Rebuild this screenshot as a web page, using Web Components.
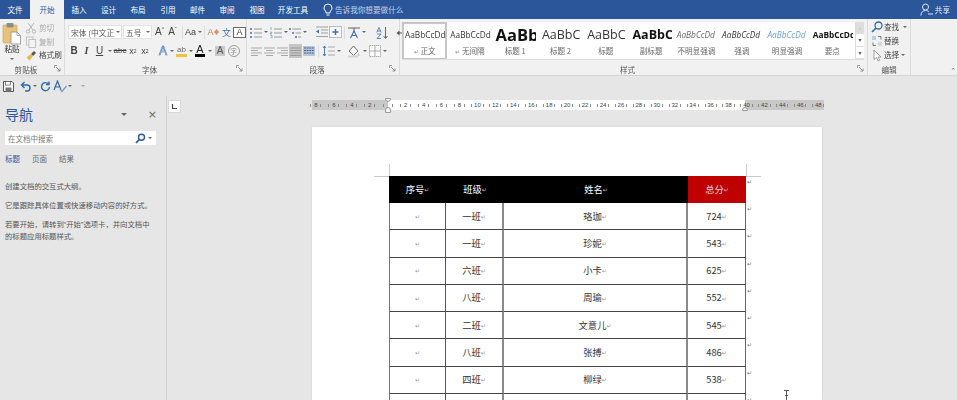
<!DOCTYPE html>
<html lang="zh"><head><meta charset="utf-8"><title>Word</title>
<style>
html,body{margin:0;padding:0;height:400px;overflow:hidden;background:#e6e6e6;font-family:"Noto Sans CJK SC","Liberation Sans",sans-serif}
</style></head><body>
<word-app></word-app>
<script>
const FONT='"Noto Sans CJK SC","Liberation Sans",sans-serif';
const CJK="'Noto Sans CJK SC'";
const ICONS={
paste:'<svg width="20" height="23" viewBox="0 0 20 23"><rect x="1" y="3" width="14" height="18" rx="1" fill="#e9c37a" stroke="#c9a057" stroke-width=".6"/><rect x="4.5" y="1" width="7" height="4.5" rx="1" fill="#8c8c8c"/><path d="M9 10h6l3.500 3.500V22H9z" fill="#fff" stroke="#8a8a8a" stroke-width=".8"/><path d="M15 10v3.500h3.500" fill="none" stroke="#8a8a8a" stroke-width=".7"/></svg>',
cut:'<svg width="12" height="12" viewBox="0 0 12 12" fill="none" stroke="#b5b5b5" stroke-width="1"><path d="M3 1l5 7M9 1L4 8"/><circle cx="3" cy="9.500" r="1.700"/><circle cx="9" cy="9.500" r="1.700"/></svg>',
copy:'<svg width="12" height="12" viewBox="0 0 12 12" fill="#f4f4f4" stroke="#bcbcbc" stroke-width=".9"><rect x="1.500" y="1" width="6.500" height="8"/><rect x="4" y="3.500" width="6.500" height="8"/></svg>',
brush:'<svg width="12" height="12" viewBox="0 0 12 12"><path d="M6 5l3-3 2 2-3 3z" fill="#555"/><path d="M1.500 8.500L6 5l2 2-3.500 4.500z" fill="#e8b84a"/></svg>',
bul:'<svg width="12" height="11" viewBox="0 0 12 11"><g fill="#6f8fbc"><rect x="0" y="1" width="2" height="2"/><rect x="0" y="5" width="2" height="2"/><rect x="0" y="9" width="2" height="2"/></g><path d="M4 2h8M4 6h8M4 10h8" stroke="#9a9a9a"/></svg>',
num:'<svg width="12" height="11" viewBox="0 0 12 11"><path d="M1 0v3M.3 5h1.500v1H.5v1h1.500M.3 8.500H2v2.500H.3" stroke="#6f8fbc" stroke-width=".7" fill="none"/><path d="M4 2h8M4 6h8M4 10h8" stroke="#9a9a9a"/></svg>',
multi:'<svg width="12" height="11" viewBox="0 0 12 11"><g fill="#6f8fbc"><rect x="0" y="1" width="2" height="2"/><rect x="3" y="5" width="2" height="2"/><rect x="6" y="9" width="2" height="2"/></g><path d="M3.500 2h8.500M6.500 6H12M9 10h3" stroke="#9a9a9a"/></svg>',
dec:'<svg width="13" height="12" viewBox="0 0 13 12"><path d="M6 4h7M6 7h7M1 10.500h12M1 1h12" stroke="#a0a0a0"/><path d="M4 3.500L1 5.500l3 2z" fill="#3f70ad"/></svg>',
inc:'<svg width="13" height="12" viewBox="0 0 13 12"><rect x=".5" y=".5" width="12" height="11" fill="#f6f6f6" stroke="#bbb"/><path d="M6.500 3v6M3.500 6h6" stroke="#3f70ad" stroke-width="1.400"/></svg>',
axis:'<svg width="14" height="13" viewBox="0 0 14 13"><path d="M1 2h12M7 2v4" stroke="#555" stroke-width=".9"/><path d="M3.500 12L7 5l3.500 7M5 9.500h4" stroke="#3f70ad" stroke-width="1.100" fill="none"/></svg>',
sort:'<svg width="13" height="13" viewBox="0 0 13 13"><path d="M3 1.500L.8 6.500M3 1.500l2.200 5M1.500 5h3M1 8h4L1 12.500h4" stroke="#3f70ad" stroke-width=".8" fill="none"/><path d="M9.500 1v11M7.500 10l2 2.500 2-2.500" stroke="#555" stroke-width=".9" fill="none"/></svg>',
mark:'<svg width="13" height="12" viewBox="0 0 13 12"><path d="M11 2v5H4" stroke="#555" stroke-width="1.100" fill="none"/><path d="M5.500 4.500L2.500 7l3 2.500z" fill="#555"/></svg>',
al:'<svg width="11" height="9" viewBox="0 0 11 9"><path d="M0 1h11M0 3.500h7M0 6h11M0 8.500h7" stroke="#a8a8a8"/></svg>',
ac:'<svg width="11" height="9" viewBox="0 0 11 9"><path d="M0 1h11M2 3.500h7M0 6h11M2 8.500h7" stroke="#a8a8a8"/></svg>',
ar:'<svg width="11" height="9" viewBox="0 0 11 9"><path d="M0 1h11M4 3.500h7M0 6h11M4 8.500h7" stroke="#a8a8a8"/></svg>',
aj:'<svg width="11" height="9" viewBox="0 0 11 9"><path d="M0 1h11M0 3.500h11M0 6h11M0 8.500h11" stroke="#9a9a9a"/></svg>',
ad:'<svg width="12" height="10" viewBox="0 0 12 10"><rect width="12" height="10" fill="#b9c6d8"/><path d="M1 2h10M1 4.500h10M1 7h10" stroke="#3e6496" stroke-dasharray="2 .6"/></svg>',
ls:'<svg width="13" height="12" viewBox="0 0 13 12"><path d="M2.500 1v10M1 3l1.500-2L4 3M1 9l1.500 2L4 9" stroke="#3f70ad" fill="none" stroke-width=".9"/><path d="M6 2h7M6 6h7M6 10h7" stroke="#aaa"/></svg>',
shade:'<svg width="14" height="13" viewBox="0 0 14 13"><path d="M6.500 1L2 6l4.500 4.500L11 6z" fill="#f7f7f7" stroke="#777"/><path d="M11.500 7.500c1 1.500 1.500 2 1 3s-2 .5-2-.5.500-1.500 1-2.500z" fill="#c9c9c9"/><rect x="1" y="10.500" width="10" height="2" fill="#d3d3d3"/></svg>',
border:'<svg width="12" height="12" viewBox="0 0 12 12"><rect x=".5" y=".5" width="11" height="11" fill="#fbfbfb" stroke="#aaa" stroke-dasharray="1.500 .6"/><path d="M6 .5v11M.5 6h11" stroke="#aaa"/></svg>',
find:'<svg width="12" height="12" viewBox="0 0 12 12" fill="none" stroke="#2b6aa8" stroke-width="1.300"><circle cx="7.500" cy="4.500" r="3.500"/><path d="M5 7l-4 4" stroke-width="1.600"/></svg>',
replace:'<svg width="12" height="12" viewBox="0 0 12 12"><path d="M1 1h4v4H1z" fill="#bcd0e4"/><path d="M7 7h4v4H7z" fill="#d8d8d8"/><path d="M7 1.500h3v3M5 10.500H2v-3" stroke="#777" fill="none"/></svg>',
select:'<svg width="12" height="13" viewBox="0 0 12 13"><path d="M3 1v9.500l2.500-2 1.800 3.500 1.400-.8L7 8h3z" fill="#fff" stroke="#888" stroke-width=".8"/></svg>',
save:'<svg width="11" height="11" viewBox="0 0 11 11"><path d="M.5.500h8.500l1.500 1.500v8.500H.5z" fill="#fff" stroke="#555"/><rect x="2.500" y=".5" width="5" height="3.500" fill="#fff" stroke="#555" stroke-width=".7"/><rect x="2.500" y="6.500" width="6" height="4" fill="#777"/></svg>',
undo:'<svg width="11" height="11" viewBox="0 0 11 11" fill="none" stroke="#2b6aa8" stroke-width="1.400"><path d="M2 4h5a3 3 0 0 1 0 6H5"/><path d="M4.500 1L1.500 4l3 3"/></svg>',
redo:'<svg width="11" height="11" viewBox="0 0 11 11" fill="none" stroke="#2b6aa8" stroke-width="1.400"><path d="M8.500 3A4 4 0 1 0 9.500 6"/><path d="M9 .5v3H6"/></svg>',
spell:'<svg width="14" height="13" viewBox="0 0 14 13" fill="none" stroke="#2b6aa8" stroke-width="1.200"><path d="M1 10L4.500 1 8 10M2.500 7h4"/><path d="M7 9l2 2.500L13.500 6" stroke="#7f95b5"/></svg>',
bulb:'<svg width="10" height="13" viewBox="0 0 10 13" fill="none" stroke="#fff" stroke-width="1"><path d="M3 8.500C1.500 7.500 1 6.300 1 5a4 4 0 0 1 8 0c0 1.300-.5 2.500-2 3.500V10H3z"/><path d="M3.500 12h3"/></svg>',
user:'<svg width="13" height="13" viewBox="0 0 13 13" fill="none" stroke="#dbe5f3" stroke-width="1"><circle cx="5.500" cy="4" r="3"/><path d="M.8 12.500C1.200 9 3 7.500 5.500 7.500c1.500 0 2.700.5 3.500 1.500M8 11h5"/></svg>',
search:'<svg width="11" height="11" viewBox="0 0 11 11" fill="none" stroke="#2b579a" stroke-width="1.400"><circle cx="6.500" cy="4.200" r="3"/><path d="M4.300 6.500L1 10" stroke-width="1.700"/></svg>',
launch:'<svg width="7" height="7" viewBox="0 0 7 7"><path d="M.5 3V.5H3" stroke="#888" fill="none" stroke-width=".8"/><path d="M2 2l3.500 3.500M6 3.500V6H3.500" stroke="#777" fill="none" stroke-width=".8"/></svg>',
tabstop:'<svg width="7" height="7" viewBox="0 0 7 7"><path d="M1.500 1v4.500H6" stroke="#444" fill="none" stroke-width="1.200"/></svg>',
ibeam:'<svg width="7" height="11" viewBox="0 0 7 11"><path d="M1 .5h5M1 10.500h5M3.500.5v10M2 5.500h3" stroke="#333" stroke-width=".8" fill="none"/></svg>'
};
class El extends HTMLElement{
  constructor(){super();this.attachShadow({mode:'open'});}
  connectedCallback(){this.shadowRoot.innerHTML=this.render();}
}
const d=(n,c)=>customElements.define(n,c);
d('x-ico',class extends El{render(){return `<style>:host{display:inline-flex;align-items:center;justify-content:center;line-height:0}</style>${ICONS[this.getAttribute('n')]||''}`}});
d('x-tool',class extends El{render(){
  const w=this.getAttribute('w')||13;const act=this.hasAttribute('on');
  return `<style>:host{display:flex;align-items:center;justify-content:center;flex:none;width:${w}px;height:14px;font:${this.getAttribute('f')||"10px 'Liberation Sans',sans-serif"};color:${this.getAttribute('c')||'#444'};${act?'background:#c6c6c6;':''}line-height:1;white-space:nowrap}</style><slot></slot>`}});
d('x-caret',class extends El{render(){return `<style>:host{display:flex;align-items:center;justify-content:center;flex:none;width:${this.getAttribute('w')||7}px;height:14px}i{width:0;height:0;border:2px solid transparent;border-top:2.500px solid #666;border-bottom:0}</style><i></i>`}});
d('x-tab',class extends El{render(){const a=this.hasAttribute('on');return `<style>:host{display:flex;align-items:center;justify-content:center;flex:none;width:${this.getAttribute('w')}px;height:19px;font-size:7.600px;color:${a?'#2b579a':'#fff'};${a?'background:#f1f1f1;':''}}</style><slot></slot>`}});
d('x-tabbar',class extends El{render(){return `<style>:host{display:flex;height:19px;background:#2b579a;align-items:center;flex:none}
.tell{display:flex;align-items:center;gap:2px;margin-left:9px;color:#c6d4ea;font-size:7.600px}
.share{margin-left:auto;display:flex;align-items:center;gap:2px;color:#e6edf7;font-size:7.600px;padding-right:7px}</style>
<x-tab w="30">文件</x-tab><x-tab w="34" on>开始</x-tab><x-tab w="30">插入</x-tab><x-tab w="29">设计</x-tab><x-tab w="30">布局</x-tab><x-tab w="30">引用</x-tab><x-tab w="29">邮件</x-tab><x-tab w="30">审阅</x-tab><x-tab w="30">视图</x-tab><x-tab w="42">开发工具</x-tab>
<div class="tell"><x-ico n="bulb"></x-ico><span>告诉我你想要做什么</span></div>
<div class="share"><x-ico n="user"></x-ico><span>共享</span></div>`}});
d('x-group',class extends El{render(){const l=this.getAttribute('label');const lc=this.hasAttribute('launch');return `<style>:host{display:flex;flex-direction:column;flex:none;box-sizing:border-box;width:${this.getAttribute('w')}px;height:56px;border-right:1px solid #dcdcdc;position:relative}
.c{flex:1;min-height:0;display:flex;flex-direction:column}
.l{height:13px;flex:none;display:flex;align-items:center;justify-content:center;font-size:7.600px;color:#555;line-height:1;padding-right:${this.getAttribute('lp')||0}px;padding-top:3px;box-sizing:border-box}
x-ico{position:absolute;right:3px;bottom:3px}</style><div class="c"><slot></slot></div><div class="l">${l}</div>${lc?'<x-ico n="launch"></x-ico>':''}`}});
d('x-row',class extends El{render(){return `<style>:host{display:flex;align-items:center;flex:none;height:${this.getAttribute('h')||14}px;margin-top:${this.getAttribute('mt')||0}px;margin-left:${this.getAttribute('ml')||0}px;gap:${this.getAttribute('g')||0}px}</style><slot></slot>`}});
d('x-box',class extends El{render(){return `<style>:host{display:flex;align-items:center;flex:none;box-sizing:border-box;width:${this.getAttribute('w')}px;height:14px;background:#fff;border:1px solid #e2e2e2;font-size:7.800px;color:#555;padding-left:2px;overflow:hidden;white-space:nowrap;margin-right:1px}span{flex:1;overflow:hidden}</style><span><slot></slot></span><x-caret w="6"></x-caret>`}});
d('x-smallbtn',class extends El{render(){return `<style>:host{display:flex;align-items:center;height:14px;gap:${this.getAttribute('g')||2}px;font-size:7.600px;color:${this.getAttribute('c')||'#444'};white-space:nowrap;line-height:1}</style><x-ico n="${this.getAttribute('n')}"></x-ico><slot></slot>`}});
d('x-style-item',class extends El{render(){const s=this.getAttribute('s')||'';const on=this.hasAttribute('on');return `<style>:host{display:flex;flex-direction:column;align-items:center;flex:none;box-sizing:border-box;width:45.300px;height:38px;overflow:hidden;${on?'border:2.500px solid #c6c6c6;':'border:2.500px solid transparent;'}}
.w{width:100%;height:19px;margin-top:2px;overflow:hidden;flex:none}
.p{height:19px;white-space:nowrap;display:flex;align-items:center;font-family:"Open Sans","Liberation Sans",sans-serif;color:#333;line-height:1;${s}}
.n{font-size:7.600px;color:#666;line-height:1;margin-top:2px;white-space:nowrap}</style><div class="w"><div class="p">${this.getAttribute('p')}</div></div><div class="n"><slot></slot></div>`}});
d('x-gallery',class extends El{render(){return `<style>:host{display:flex;flex:none;margin:3px 0 0 2px;height:38px;width:462px;background:#fff;box-sizing:border-box;border-bottom:1px solid #ddd}
.items{display:flex;width:453px;overflow:hidden;flex:none}
.sb{width:9px;flex:none;display:flex;flex-direction:column;border-left:1px solid #ddd;box-sizing:border-box}
.sb div{flex:1;display:flex;align-items:center;justify-content:center;font:6px "DejaVu Sans",sans-serif;color:#555;border-bottom:1px solid #e0e0e0;background:#fff}
.sb div:first-child{background:#dedede;color:#ccc}</style><div class="items"><slot></slot></div><div class="sb"><div>▴</div><div>▾</div><div>▾</div></div>`}});
d('x-ribbon',class extends El{render(){return `<style>:host{display:flex;height:56px;background:#f1f1f1;border-bottom:1px solid #d4d4d4;flex:none;box-sizing:content-box;font-family:${FONT};position:relative}
.sep{width:1px;height:13px;background:#ddd;margin:0 2px;flex:none}
.clip{display:flex;height:43px}.pv{width:24px;display:flex;flex-direction:column;align-items:center;font-size:7.600px;color:#333;padding-top:3px;line-height:1}
.pv span{margin-top:0}
.col{display:flex;flex-direction:column;margin-top:2px;margin-left:1px}
.collapse{position:absolute;right:1px;bottom:0;font:7px "DejaVu Sans",sans-serif;color:#666}
b,i,u{font-family:"Liberation Sans",sans-serif}
sub,sup{font-size:5px;line-height:0}
</style>
<x-group w="65" label="剪贴板" launch lp="12"><div class="clip"><div class="pv"><x-ico n="paste"></x-ico><span>粘贴</span><x-caret w="8" style="height:8px;margin-top:2px"></x-caret></div>
<div class="col"><x-smallbtn n="cut" c="#a8a8a8">剪切</x-smallbtn><x-smallbtn n="copy" c="#a8a8a8">复制</x-smallbtn><x-smallbtn n="brush">格式刷</x-smallbtn></div></div></x-group>
<x-group w="182" label="字体" launch lp="12">
<x-row mt="6" ml="3"><x-box w="54">宋体 (中文正文)</x-box><x-box w="29">五号</x-box><x-tool w="13" f="10px 'Liberation Sans'">A<span style="font-size:5px;margin-top:-5px">^</span></x-tool><x-tool w="13" f="10px 'Liberation Sans'">A<span style="font-size:5px;margin-top:-5px">ˇ</span></x-tool><span class="sep" style="margin:0 1px 0 3px"></span><x-tool w="13" f="9px 'Liberation Sans'">Aa</x-tool><x-caret w="6"></x-caret><span class="sep" style="margin:0 1px"></span><x-tool w="14" f="9px 'Liberation Sans'" c="#b9855f">A<svg width="5" height="6" viewBox="0 0 5 6"><path d="M2.500 0L5 3 2.500 6 0 3z" fill="#e08a6a"/></svg></x-tool><x-tool w="13" f="9px ${CJK}" c="#3f70ad">文</x-tool><x-tool w="13" f="9px 'Liberation Sans'"><span style="border:1px solid #666;padding:0 2px;background:#fff">A</span></x-tool></x-row>
<x-row mt="5" ml="3"><x-tool w="12"><b>B</b></x-tool><x-tool><i style="font-family:'Liberation Serif';font-weight:700">I</i></x-tool><x-tool><u>U</u></x-tool><x-caret></x-caret><x-tool w="14" f="8px 'Liberation Sans'"><s>abc</s></x-tool><x-tool w="12" f="9px 'Liberation Sans'"><b style="font-weight:500">x</b><sub>2</sub></x-tool><x-tool w="12" f="9px 'Liberation Sans'"><b style="font-weight:500">x</b><sup>2</sup></x-tool><span style="width:6px;flex:none"></span>
<x-tool w="12" f="12px 'Liberation Sans'" c="#7fa2d3"><span style="-webkit-text-stroke:.6px #4472b5;color:#e8eef8">A</span></x-tool><x-caret w="6"></x-caret>
<x-tool w="13" f="8px 'Liberation Sans'" c="#6a6a6a"><span style="border-bottom:3px solid #f0c23c;line-height:8px;padding:0 1px">ab</span></x-tool><x-caret w="6"></x-caret>
<x-tool w="12" f="11px 'Liberation Sans'" c="#222"><span style="border-bottom:3px solid #000;line-height:9px;padding:0 1px">A</span></x-tool><x-caret w="7"></x-caret>
<x-tool w="14" f="10px 'Liberation Sans'" c="#555"><span style="background:#c9c9c9;padding:0 1.500px">A</span></x-tool><x-tool w="13" f="8px ${CJK}" c="#888"><span style="border:1px solid #999;border-radius:50%;width:10px;height:10px;display:flex;align-items:center;justify-content:center;font-size:6.500px">字</span></x-tool></x-row>
</x-group>
<x-group w="153" label="段落" launch lp="12">
<x-row mt="6" ml="2"><x-tool w="13"><x-ico n="bul"></x-ico></x-tool><x-caret></x-caret><x-tool w="13"><x-ico n="num"></x-ico></x-tool><x-caret></x-caret><x-tool w="12"><x-ico n="multi"></x-ico></x-tool><x-caret></x-caret><span style="width:6px;flex:none"></span><x-tool w="14"><x-ico n="dec"></x-ico></x-tool><x-tool w="14"><x-ico n="inc"></x-ico></x-tool><span class="sep" style="margin:0 2px"></span><x-tool w="14"><x-ico n="axis"></x-ico></x-tool><x-caret w="6"></x-caret><span style="width:9px;flex:none"></span><x-tool w="13"><x-ico n="sort"></x-ico></x-tool><span style="width:5px;flex:none"></span><x-tool w="13"><x-ico n="mark"></x-ico></x-tool></x-row>
<x-row mt="5" ml="3"><x-tool w="13"><x-ico n="al"></x-ico></x-tool><x-tool w="13"><x-ico n="ac"></x-ico></x-tool><x-tool w="13"><x-ico n="ar"></x-ico></x-tool><x-tool w="13" on><x-ico n="aj"></x-ico></x-tool><x-tool w="13"><x-ico n="ad"></x-ico></x-tool><span class="sep" style="margin:0 2px 0 3px"></span><x-tool w="14"><x-ico n="ls"></x-ico></x-tool><x-caret></x-caret><span style="width:5px;flex:none"></span><x-tool w="14"><x-ico n="shade"></x-ico></x-tool><x-caret></x-caret><x-tool w="13"><x-ico n="border"></x-ico></x-tool><x-caret></x-caret></x-row>
</x-group>
<x-group w="468" label="样式" launch lp="12"><x-gallery>
<x-style-item on p="AaBbCcDd" s="font-size:8.300px;padding-left:1px"><small style="font-size:6px;color:#888">↵</small> 正文</x-style-item>
<x-style-item p="AaBbCcDd" s="font-size:8.300px;padding-left:1px"><small style="font-size:6px;color:#888">↵</small> 无间隔</x-style-item>
<x-style-item p="AaBbC" s="font-size:16.500px;font-weight:700;color:#111;padding-left:1px">标题 1</x-style-item>
<x-style-item p="AaBbC" s="font-size:12.500px;padding-left:2px">标题 2</x-style-item>
<x-style-item p="AaBbC" s="font-size:12.500px;padding-left:2px">标题</x-style-item>
<x-style-item p="AaBbC" s="font-size:12.500px;font-weight:700;color:#111;padding-left:2px">副标题</x-style-item>
<x-style-item p="AaBbCcDd" s="font-size:8.300px;font-style:italic;color:#666;padding-left:1px">不明显强调</x-style-item>
<x-style-item p="AaBbCcDd" s="font-size:8.300px;font-style:italic;padding-left:1px">强调</x-style-item>
<x-style-item p="AaBbCcDd" s="font-size:8.300px;font-style:italic;color:#6a9bd0;padding-left:1px">明显强调</x-style-item>
<x-style-item p="AaBbCcDd" s="font-size:8.300px;font-weight:700;color:#111;padding-left:1px">要点</x-style-item>
</x-gallery></x-group>
<x-group w="43" label="编辑"><div class="col" style="margin:1px 0 0 3px;gap:0"><x-smallbtn g="1" n="find">查找 <x-caret w="6" style="display:inline-flex;height:8px;margin-left:2px"></x-caret></x-smallbtn><x-smallbtn g="1" n="replace">替换</x-smallbtn><x-smallbtn g="1" n="select">选择 <x-caret w="6" style="display:inline-flex;height:8px"></x-caret></x-smallbtn></div></x-group>
<span class="collapse">⌃</span>`}});
d('x-qat',class extends El{render(){return `<style>:host{display:flex;align-items:center;height:20px;flex:none;padding-left:2px;background:#e6e6e6;border-bottom:0}
span{color:#bbb;font-size:7px}</style><x-tool w="12"><x-ico n="save"></x-ico></x-tool><span style="width:5px"></span><x-tool w="13"><x-ico n="undo"></x-ico></x-tool><x-caret w="6"></x-caret><x-tool w="14"><x-ico n="redo"></x-ico></x-tool><span style="width:1px"></span><x-tool w="14"><x-ico n="spell"></x-ico></x-tool><x-caret w="6"></x-caret><span style="width:6px"></span><x-caret w="7" style="opacity:.5"></x-caret>`}});
d('x-nav',class extends El{render(){return `<style>:host{display:block;box-sizing:border-box;width:167px;height:100%;padding:0 10px 0 5px;border-right:1px solid #d0d0d0;background:#e6e6e6;color:#444;font-family:${FONT};flex:none}
.head{display:flex;align-items:center;height:26px;margin-top:5px;font-size:14px;color:#2b579a;line-height:1}
.head b{font-weight:400;flex:1}
.arrow{width:0;height:0;border:3px solid transparent;border-top:3.500px solid #666;border-bottom:0;margin-right:21px}
.x{font:11px "DejaVu Sans",sans-serif;color:#666;margin-right:-1px}
.search{display:flex;align-items:center;box-sizing:border-box;height:14px;background:#fff;font-size:7.500px;color:#777;padding:0 3px;margin-top:4px;width:151px}
.search span{flex:1}
.tabs{display:flex;gap:12px;margin-top:9px;font-size:7.500px;color:#666;line-height:9px}
.tabs .on{color:#2b579a}
p{margin:0;font-size:7.350px;line-height:10.200px;color:#555;white-space:nowrap}
q{quotes:none;font-family:"Liberation Sans",sans-serif}
</style><div class="head"><b>导航</b><i class="arrow"></i><span class="x">×</span></div>
<div class="search"><span>在文档中搜索</span><x-ico n="search"></x-ico><x-caret w="7"></x-caret></div>
<div class="tabs"><span class="on">标题</span><span>页面</span><span>结果</span></div>
<p style="margin-top:18px">创建文档的交互式大纲。</p><p style="margin-top:9px">它是跟踪具体位置或快速移动内容的好方式。</p><p style="margin-top:9px">若要开始，请转到<q>“</q>开始<q>”</q>选项卡，并向文档中<br>的标题应用标题样式。</p>`}});
d('x-ruler',class extends El{render(){
  const nums=[8,6,4,2,'',2,4,6,8,10,12,14,16,18,20,22,24,26,28,30,32,34,36,38,40,42,44,46,48];
  const c=nums.map((n,i)=>`<div class="c"><i></i><span>${n}</span><i></i></div>`).join('');
  return `<style>:host{display:block;position:relative;flex:none;width:512px;height:10px;background:linear-gradient(90deg,#c8c8c8 0 76px,#fff 76px 433px,#c8c8c8 433px)}
.t{display:flex;height:10px;margin-left:-5px;overflow:hidden;width:517px}
.c{flex:none;width:17.950px;display:flex;align-items:center;justify-content:space-around;font:6px "Liberation Sans",sans-serif;color:#444;box-sizing:border-box;padding:0 2px}
.c i{width:1px;height:3px;background:#8a8a8a;flex:none}
.m{position:absolute;width:6px;height:4px;background:#f5f5f5;border:1px solid #999;box-sizing:border-box}
</style><div class="t">${c}</div><div class="m" style="left:73px;top:-2px;border-radius:0 0 3px 3px"></div><div class="m" style="left:73px;top:7px;border-radius:3px 3px 0 0;height:6px"></div><div class="m" style="left:430px;top:7px;height:4px;border-radius:3px 3px 0 0"></div>`}});
d('x-score-row',class extends El{render(){
  const [a,b,c]=(this.getAttribute('v')||'').split(',');
  const h=this.hasAttribute('head');
  return `<style>:host{display:grid;grid-template-columns:57px 58px 184px 58px 18px;height:${h?27:27.300}px;box-sizing:border-box;position:relative;flex:none}
.d{display:flex;align-items:center;justify-content:center;box-sizing:border-box;font-size:9.300px;color:${h?'#fff':'#333'};${h?'background:#000':'border-bottom:1px solid #444'};line-height:1}
.c1{${h?'':'border-left:1px solid #777;border-right:1px solid #555;color:#999'}}
.c2{${h?'':'border-right:2px solid #8a8a8a'}}
.c3{${h?'':'border-right:2px solid #8a8a8a'}}
.c4{${h?'background:#c00000;color:#f7dada':'border-right:1px solid #666'}}
small{font:6px "DejaVu Sans",sans-serif;color:${h?'#bbb':'#999'}}
.e{font:6px "DejaVu Sans",sans-serif;color:#777;padding:3px 0 0 1px;line-height:1}</style>
<div class="d c1">${h?'序号':''}<small>↵</small></div><div class="d c2">${a}<small>↵</small></div><div class="d c3">${b}<small>↵</small></div><div class="d c4">${c}<small>↵</small></div><div class="e">↵</div>`}});
d('x-doc',class extends El{render(){return `<style>:host{display:flex;flex-direction:column;flex:1;min-width:0;height:100%;background:#e6e6e6;font-family:${FONT};overflow:hidden}
.top{display:flex;align-items:flex-start;margin-top:4px;height:27px;flex:none}
.stop{width:13px;height:13px;margin:0 131px 0 1px;background:#fff;border:1px solid #d8d8d8;box-sizing:border-box;display:flex;align-items:center;justify-content:center;flex:none}
.page{margin-left:145px;width:510px;background:#fff;flex:1;min-height:0;padding:49px 0 0 77px;box-sizing:border-box;position:relative;box-shadow:0 0 2px #d0d0d0}
.mk{position:absolute;background:#c8c8c8}
.cur{position:absolute;left:471px;top:263px}
</style><div class="top"><div class="stop"><x-ico n="tabstop"></x-ico></div><x-ruler></x-ruler></div>
<div class="page">
<i class="mk" style="left:77px;top:37px;width:1px;height:12px"></i><i class="mk" style="left:62px;top:49px;width:15px;height:1px"></i><i class="mk" style="left:434px;top:37px;width:1px;height:12px"></i><i class="mk" style="left:434px;top:49px;width:15px;height:1px"></i>
<slot></slot><x-ico class="cur" n="ibeam"></x-ico></div>`}});
d('word-app',class extends El{render(){
 const rows=['一班,珞珈,724','一班,珍妮,543','六班,小卡,625','八班,周瑜,552','二班,文意儿,545','八班,张搏,486','四班,柳绿,538',',,'];
 return `<style>:host{display:flex;flex-direction:column;width:957px;height:400px;overflow:hidden;font-family:${FONT};filter:blur(.3px)}
.main{display:flex;flex:1;min-height:0}</style>
<x-tabbar></x-tabbar><x-ribbon></x-ribbon>
<x-qat></x-qat>
<div class="main"><x-nav></x-nav><x-doc><x-score-row head v="班级,姓名,总分"></x-score-row>${rows.map(r=>`<x-score-row v="${r}"></x-score-row>`).join('')}</x-doc></div>`}});
</script>
</body></html>
